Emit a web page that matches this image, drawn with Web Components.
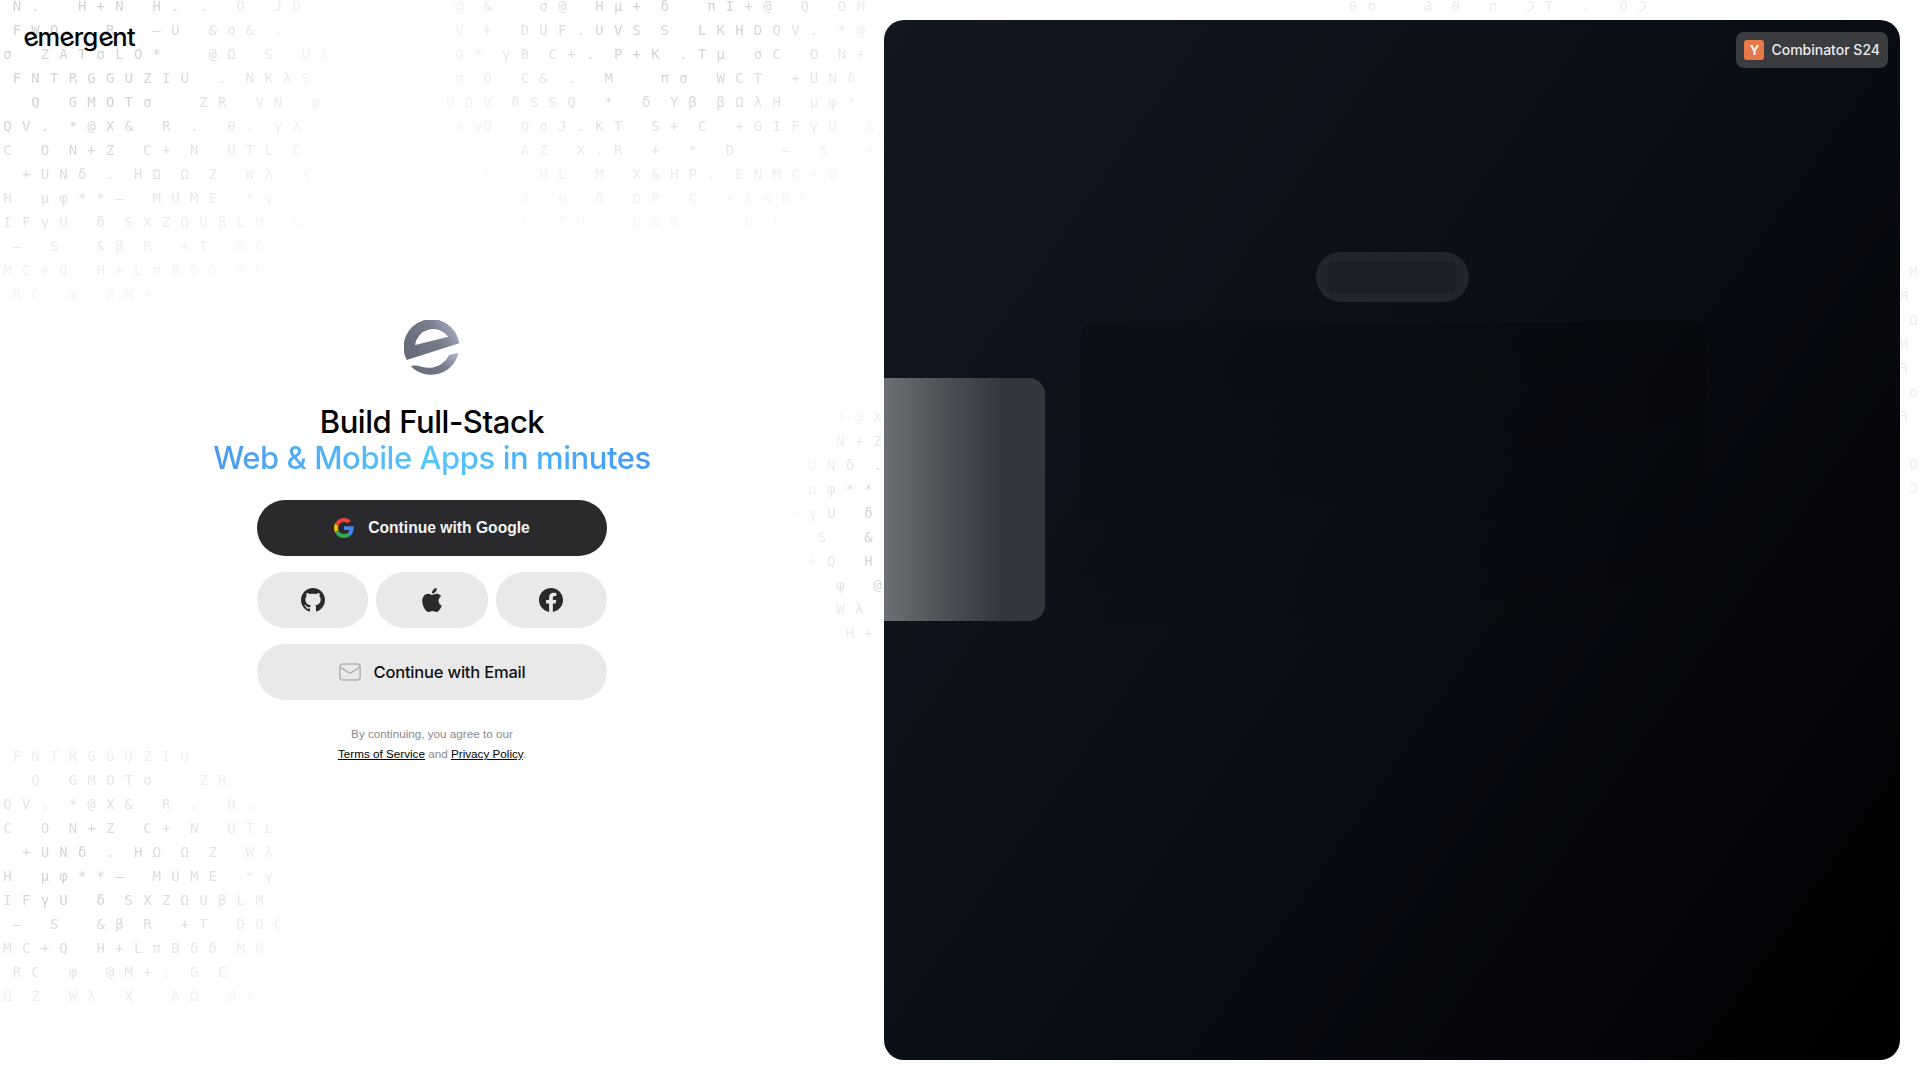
<!DOCTYPE html>
<html lang="en">
<head>
<meta charset="utf-8">
<title>emergent</title>
<style>
    html, body { margin: 0; height: 100%; background: #fff; }
</style>
</head>
<body>
<login-page>
    <glyph-field slot="glyphs" set="topLeft" trim style="left:3.33px;top:0;--mask:radial-gradient(ellipse 330px 290px at 60px 60px,#000 25%,transparent 100%)"></glyph-field>
    <glyph-field slot="glyphs" set="topMiddle" style="left:446px;top:0;--mask:radial-gradient(ellipse 300px 240px at 225px 25px,#000 20%,transparent 100%)"></glyph-field>
    <glyph-field slot="glyphs" set="bottomLeft" trim style="left:3.33px;top:750px;--mask:radial-gradient(ellipse 290px 190px at 80px 130px,#000 15%,transparent 100%)"></glyph-field>
    <glyph-field slot="glyphs" set="midRight" style="left:771px;top:411px;--mask:radial-gradient(ellipse 105px 170px at 118px 124px,#000 25%,transparent 100%)"></glyph-field>
    <glyph-field slot="glyphs" set="topRight" flip style="right:273px;top:0;--mask:linear-gradient(90deg,#000,#000)"></glyph-field>
    <glyph-field slot="glyphs" set="farRight" flip style="right:2px;top:266px;--mask:linear-gradient(90deg,#000,#000)"></glyph-field>

    <word-mark slot="wordmark"><i>e</i>m<i>e</i>rg<i>e</i>nt</word-mark>

    <auth-card slot="card">
        <e-mark slot="mark"></e-mark>
        <span slot="title">Build Full-Stack</span>
        <span slot="subtitle">Web &amp; Mobile Apps in minutes</span>
        <auth-button slot="primary" variant="dark" icon="google">Continue with Google</auth-button>
        <auth-button slot="socials" icon="github" label="GitHub"></auth-button>
        <auth-button slot="socials" icon="apple" label="Apple"></auth-button>
        <auth-button slot="socials" icon="facebook" label="Facebook"></auth-button>
        <auth-button slot="email" variant="light" icon="mail">Continue with Email</auth-button>
    </auth-card>

    <promo-panel slot="panel"></promo-panel>
</login-page>

<script>
const glyphSets = {
    topLeft: [
        "2N 4. 9H 11+ 13N 17H 19. 22. 26O 30J 32D",
        "2F 4W 6O 12R 17\u2014 19U 23& 25\u03c3 27& 30. 34.",
        "1\u03c3 5Z 7A 9T 11\u03c3 13L 15O 17* 23@ 25\u03a9 29S 33U 35&",
        "2F 4N 6T 8R 10G 12G 14U 16Z 18I 20U 24. 27N 29K 31\u03bb 33S",
        "4Q 8G 10M 12O 14T 16\u03c3 22Z 24R 28V 30N 34\u03c6",
        "1Q 3V 5. 8* 10@ 12X 14& 18R 21. 25\u03b8 27. 30\u03b3 32\u03bb",
        "1C 5O 8N 10+ 12Z 16C 18+ 21N 25U 27T 29L 32C",
        "3+ 5U 7N 9\u03b4 12. 15H 17\u03a9 20\u03a9 23Z 27W 29\u03bb 33X",
        "1H 5\u03bc 7\u03c6 9* 11* 13\u2014 17M 19U 21M 23E 27* 29\u03b3 31. 34.",
        "1I 3F 5\u03b3 7U 11\u03b4 14S 16X 18Z 20\u03a9 22U 24\u03b2 26L 28M 32&",
        "2\u2014 6S 11& 13\u03b2 16R 20+ 22T 26D 28O 30C",
        "1M 3C 5+ 7Q 11H 13+ 15L 17\u03c0 19B 21\u03b4 23\u03b4 26M 28N",
        "2R 4C 8\u03c6 12@ 14M 16+ 18. 21G 24E"
    ],
    topMiddle: [
        "1@ 4& 10\u03c3 12@ 16H 18\u03bc 20+ 23\u03b4 28\u03c0 30I 32+ 34@ 38Q 42O 44M",
        "1V 4+ 8D 10U 12F 14. 16U 18V 20S 23S 27L 29K 31H 33D 35Q 37V 39. 42* 44@",
        "1O 3* 6\u03b3 8B 11C 13+ 15. 18P 20+ 22K 25. 27T 29\u03bc 33\u03c3 35C 39O 42N 44+",
        "1\u03c0 4O 8C 10& 13. 17M 23\u03c0 25\u03c3 29W 31C 33T 37+ 39U 41N 43\u03b4",
        "0U 2\u03a9 4V 7\u03b4 9S 11S 13Q 17* 21\u03b4 24Y 26\u03b2 29\u03b2 31\u03a9 33\u03bb 35H 39\u03bc 41\u03c6 43*",
        "1A 3\u03b3 4\u03a9 8Q 10\u03c3 12J 14. 16K 18T 22S 24+ 27C 31+ 33G 35I 37F 39\u03b3 41U 45&",
        "0\u2014 8A 10Z 14X 16. 18R 22+ 26* 30D 36\u2014 40S 45+",
        "1O 4+ 10H 12L 16M 20X 22& 24H 26P 28. 31E 33N 35M 37C 39+ 41Q",
        "4\u03b4 6@ 8\u03b8 12\u03bc 16\u03b4 20\u03a9 22P 26C 30+ 32& 34& 36R 38C",
        "8C 12T 14U 20N 22K 24O 26. 32\u03a9 35C 38Z"
    ],
    bottomLeft: [
        "2F 4N 6T 8R 10G 12G 14U 16Z 18I 20U",
        "4Q 8G 10M 12O 14T 16\u03c3 22Z 24R",
        "1Q 3V 5. 8* 10@ 12X 14& 18R 21. 25\u03b8 27.",
        "1C 5O 8N 10+ 12Z 16C 18+ 21N 25U 27T 29L",
        "3+ 5U 7N 9\u03b4 12. 15H 17\u03a9 20\u03a9 23Z 27W 29\u03bb",
        "1H 5\u03bc 7\u03c6 9* 11* 13\u2014 17M 19U 21M 23E 27* 29\u03b3",
        "1I 3F 5\u03b3 7U 11\u03b4 14S 16X 18Z 20\u03a9 22U 24\u03b2 26L 28M",
        "2\u2014 6S 11& 13\u03b2 16R 20+ 22T 26D 28O 30C",
        "1M 3C 5+ 7Q 11H 13+ 15L 17\u03c0 19B 21\u03b4 23\u03b4 26M 28N",
        "2R 4C 8\u03c6 12@ 14M 16+ 18. 21G 24E",
        "1\u03a9 4Z 8W 10\u03bb 14X 19A 21\u03a9 25@ 27X"
    ],
    midRight: [
        "7* 9@ 11X",
        "7N 9+ 11Z",
        "2+ 4U 6N 8\u03b4 11.",
        "4\u03bc 6\u03c6 8* 10*",
        "2F 4\u03b3 6U 10\u03b4",
        "1\u2014 5S 10&",
        "0R 2C 4+ 6Q 10H",
        "1R 3C 7\u03c6 11@",
        "0\u03a9 3Z 7W 9\u03bb",
        "8H 10+"
    ],
    topRight: ["0C 2O 6. 10T 12C 16\u03c0 20\u03b8 23& 29\u03c3 31\u03b8"],
    farRight: ["0M", "1R", "0\u03a9", "1N", "1F", "0\u03c3", "1F", "", "0Q", "0C"]
};

class GlyphField extends HTMLElement {
    connectedCallback() {
        const root = this.attachShadow({ mode: 'open' });
        const rows = glyphSets[this.getAttribute('set')].map(row => {
            let line = '';
            row.split(' ').filter(Boolean).forEach(token => {
                const ch = token.slice(-1);
                line = line.padEnd(parseInt(token)) + ch;
            });
            return this.hasAttribute('trim') ? line.slice(1) : line;
        });
        root.innerHTML = `
            <style>
                :host {
                    display: block;
                    position: absolute;
                    pointer-events: none;
                    color: #d4d4d4;
                    font: 14px/12px "DejaVu Sans Mono", monospace;
                    letter-spacing: 0.9px;
                    -webkit-mask-image: var(--mask);
                    mask-image: var(--mask);
                }
                :host([flip]) { transform: scaleX(-1); color: #ececec; }
                div { height: 24px; white-space: pre; }
            </style>
            ${rows.map(r => `<div>${r.replace(/&/g, '&amp;')}</div>`).join('')}
        `;
    }
}
customElements.define('glyph-field', GlyphField);

class WordMark extends HTMLElement {
    connectedCallback() {
        this.attachShadow({ mode: 'open' }).innerHTML = `
            <style>
                :host {
                    display: block;
                    position: absolute;
                    z-index: 1;
                    left: 23px;
                    top: 19px;
                    color: #000;
                    font: 500 25.5px/36px Inter, sans-serif;
                    letter-spacing: -0.6px;
                }
                ::slotted(i) {
                    display: inline-block;
                    font-style: normal;
                    transform: rotate(-16deg);
                }
            </style>
            <slot></slot>
        `;
    }
}
customElements.define('word-mark', WordMark);

class EMark extends HTMLElement {
    connectedCallback() {
        this.attachShadow({ mode: 'open' }).innerHTML = `
            <style>
                :host { display: block; width: 56px; height: 56px; }
                svg { display: block; }
            </style>
            <svg width="56" height="56" viewBox="0 0 56 56">
                <defs>
                    <linearGradient id="steel" x1="0" y1="0.7" x2="1" y2="0.2">
                        <stop offset="0" stop-color="#666b78"/>
                        <stop offset="0.6" stop-color="#787d8c"/>
                        <stop offset="1" stop-color="#aeb2c6"/>
                    </linearGradient>
                </defs>
                <path fill="url(#steel)" fill-rule="evenodd" d="M2.7 40A28 28 0 1 1 55.3 23.3ZM11 25A18.5 18.5 0 0 1 44.3 16.7Z"/>
                <path fill="url(#steel)" d="M54.5 32.7A28 28 0 0 1 6.7 46C13 44 19 48 26 47.7C34 47.5 42 42 45 35Z"/>
            </svg>
        `;
    }
}
customElements.define('e-mark', EMark);

const authIcons = {
    google: `<svg width="20" height="20" viewBox="0 0 48 48">
        <path fill="#EA4335" d="M24 9.5c3.54 0 6.71 1.22 9.21 3.6l6.85-6.85C35.9 2.38 30.47 0 24 0 14.62 0 6.51 5.38 2.56 13.22l7.98 6.19C12.43 13.72 17.74 9.5 24 9.5z"/>
        <path fill="#4285F4" d="M46.98 24.55c0-1.57-.15-3.09-.38-4.55H24v9.02h12.94c-.58 2.96-2.26 5.48-4.78 7.18l7.73 6c4.51-4.18 7.09-10.36 7.09-17.65z"/>
        <path fill="#FBBC05" d="M10.53 28.59c-.48-1.45-.76-2.99-.76-4.59s.27-3.14.76-4.59l-7.98-6.19C.92 16.46 0 20.12 0 24c0 3.88.92 7.54 2.56 10.78l7.97-6.19z"/>
        <path fill="#34A853" d="M24 48c6.48 0 11.93-2.13 15.89-5.81l-7.73-6c-2.15 1.45-4.92 2.3-8.16 2.3-6.26 0-11.57-4.22-13.47-9.91l-7.98 6.19C6.51 42.62 14.62 48 24 48z"/>
    </svg>`,
    github: `<svg width="24" height="24" viewBox="0 0 16 16" fill="#2a2a2c"><path d="M8 0C3.58 0 0 3.58 0 8c0 3.54 2.29 6.53 5.47 7.59.4.07.55-.17.55-.38 0-.19-.01-.82-.01-1.49-2.01.37-2.53-.49-2.69-.94-.09-.23-.48-.94-.82-1.13-.28-.15-.68-.52-.01-.53.63-.01 1.08.58 1.23.82.72 1.21 1.87.87 2.33.66.07-.52.28-.87.51-1.07-1.78-.2-3.64-.89-3.64-3.95 0-.87.31-1.59.82-2.15-.08-.2-.36-1.02.08-2.12 0 0 .67-.21 2.2.82.64-.18 1.32-.27 2-.27.68 0 1.36.09 2 .27 1.53-1.04 2.2-.82 2.2-.82.44 1.1.16 1.92.08 2.12.51.56.82 1.27.82 2.15 0 3.07-1.87 3.75-3.65 3.95.29.25.54.73.54 1.48 0 1.07-.01 1.93-.01 2.2 0 .21.15.46.55.38A8.013 8.013 0 0016 8c0-4.42-3.58-8-8-8z"/></svg>`,
    apple: `<svg width="24" height="24" viewBox="0 0 24 24" fill="#2a2a2c"><path d="M12.152 6.896c-.948 0-2.415-1.078-3.96-1.04-2.04.027-3.91 1.183-4.961 3.014-2.117 3.675-.546 9.103 1.519 12.09 1.013 1.454 2.208 3.09 3.792 3.039 1.52-.065 2.09-.987 3.935-.987 1.831 0 2.35.987 3.96.948 1.637-.026 2.676-1.48 3.676-2.948 1.156-1.688 1.636-3.325 1.662-3.415-.039-.013-3.182-1.221-3.22-4.857-.026-3.04 2.48-4.494 2.597-4.559-1.429-2.09-3.623-2.324-4.39-2.376-2-.156-3.675 1.09-4.61 1.09zM15.53 3.83c.843-1.012 1.4-2.427 1.245-3.83-1.207.052-2.662.805-3.532 1.818-.78.896-1.454 2.338-1.273 3.714 1.338.104 2.715-.688 3.559-1.701"/></svg>`,
    facebook: `<svg width="24" height="24" viewBox="0 0 24 24" fill="#2a2a2c"><path d="M24 12.073c0-6.627-5.373-12-12-12s-12 5.373-12 12c0 5.99 4.388 10.954 10.125 11.854v-8.385H7.078v-3.47h3.047V9.43c0-3.007 1.792-4.669 4.533-4.669 1.312 0 2.686.235 2.686.235v2.953H15.83c-1.491 0-1.956.925-1.956 1.874v2.25h3.328l-.532 3.47h-2.796v8.385C19.612 23.027 24 18.062 24 12.073z"/></svg>`,
    mail: `<svg width="22" height="18" viewBox="0 0 22 18" fill="none" stroke="#b2b2b2" stroke-width="1.5" stroke-linejoin="round"><rect x="0.9" y="0.9" width="20.2" height="16.2" rx="3"/><path d="M1.2 4.2l8 5.2q1.8 1.1 3.6 0l8-5.2"/></svg>`
};

class AuthButton extends HTMLElement {
    connectedCallback() {
        this.attachShadow({ mode: 'open' }).innerHTML = `
            <style>
                :host {
                    display: flex;
                    flex: 1 0 56px;
                    align-items: center;
                    justify-content: center;
                    gap: 10px;
                    height: 56px;
                    border-radius: 28px;
                    background: #e9e9e9;
                    cursor: pointer;
                }
                :host([variant="dark"]) {
                    gap: 14px;
                    background: #2a2a2c;
                    color: #f4f4f4;
                    font: 700 15.65px "Liberation Sans", Arial, sans-serif;
                }
                :host([variant="light"]) {
                    gap: 13px;
                    color: #111;
                    font: 500 16.5px Inter, sans-serif;
                    letter-spacing: -0.2px;
                }
                svg { display: block; flex: none; }
                .ico { flex: none; }
            </style>
            <span class="ico" aria-label="${this.getAttribute('label') ?? ''}">${authIcons[this.getAttribute('icon')]}</span>
            <slot></slot>
        `;
    }
}
customElements.define('auth-button', AuthButton);

class AuthCard extends HTMLElement {
    connectedCallback() {
        this.attachShadow({ mode: 'open' }).innerHTML = `
            <style>
                :host {
                    display: flex;
                    flex-direction: column;
                    align-items: center;
                    width: 500px;
                    position: relative;
                }
                h1 {
                    margin: 28px 0 24px;
                    font: 500 31px/36px Inter, sans-serif;
                    letter-spacing: -0.43px;
                    text-align: center;
                    color: #000;
                }
                h1 .sub {
                    display: block;
                    background: linear-gradient(90deg, #4a9bef 0%, #58c6fb 50%, #3f97f7 100%);
                    -webkit-background-clip: text;
                    background-clip: text;
                    color: transparent;
                }
                .stack {
                    display: flex;
                    flex-direction: column;
                    gap: 16px;
                    width: 350px;
                }
                .row { display: flex; gap: 8px; }
                p {
                    margin: 24px 0 0;
                    color: #8a8a8a;
                    font: 11.7px/20px "Liberation Sans", Arial, sans-serif;
                    text-align: center;
                }
                a { color: #000; text-decoration: underline; }
            </style>
            <slot name="mark"></slot>
            <h1><slot name="title"></slot><span class="sub"><slot name="subtitle"></slot></span></h1>
            <div class="stack">
                <slot name="primary"></slot>
                <div class="row"><slot name="socials"></slot></div>
                <slot name="email"></slot>
            </div>
            <p>By continuing, you agree to our<br><a href="#">Terms of Service</a> and <a href="#">Privacy Policy</a>.</p>
        `;
    }
}
customElements.define('auth-card', AuthCard);

class YcBadge extends HTMLElement {
    connectedCallback() {
        this.attachShadow({ mode: 'open' }).innerHTML = `
            <style>
                :host {
                    display: flex;
                    align-items: center;
                    gap: 7px;
                    position: absolute;
                    top: 12px;
                    right: 12px;
                    height: 36px;
                    padding: 0 8px;
                    border-radius: 8px;
                    background: #3a3c40;
                    color: #ececec;
                    font: 500 14px Inter, sans-serif;
                }
                b {
                    display: flex;
                    align-items: center;
                    justify-content: center;
                    width: 20px;
                    height: 20px;
                    border-radius: 3px;
                    background: #e8794a;
                    color: #fff;
                    font-size: 13px;
                    font-weight: 700;
                }
                span { padding-bottom: 2px; }
            </style>
            <b>Y</b><span>Combinator S24</span>
        `;
    }
}
customElements.define('yc-badge', YcBadge);

class PromoPanel extends HTMLElement {
    connectedCallback() {
        this.attachShadow({ mode: 'open' }).innerHTML = `
            <style>
                :host {
                    display: flex;
                    flex-direction: column;
                    position: relative;
                    height: 100%;
                    overflow: hidden;
                    padding-top: 232px;
                    box-sizing: border-box;
                    border-radius: 20px;
                    background: linear-gradient(125deg, #111622 0%, #0b0f17 45%, #05070c 75%, #000 100%);
                }
                .pill {
                    align-self: center;
                    display: flex;
                    align-items: center;
                    justify-content: center;
                    width: 153px;
                    height: 50px;
                    border-radius: 25px;
                    background: #22252c;
                }
                .pill div {
                    width: 128px;
                    height: 32px;
                    border-radius: 5px;
                    background: #1b1e24;
                }
                .frame {
                    width: 625px;
                    height: 360px;
                    margin: 20px 0 0 196px;
                    border-radius: 14px;
                    background: linear-gradient(180deg, rgba(0,0,0,.2), rgba(0,0,0,0) 100%);
                }
                .side {
                    position: absolute;
                    left: 0;
                    top: 358px;
                    width: 161px;
                    height: 243px;
                    border-radius: 0 16px 16px 0;
                    background: linear-gradient(90deg, #6c6f73 0%, #4b4e54 40%, #32353b 75%, #34373d 100%);
                }
            </style>
            <yc-badge></yc-badge>
            <div class="pill"><div></div></div>
            <div class="frame"></div>
            <div class="side"></div>
        `;
    }
}
customElements.define('promo-panel', PromoPanel);

class LoginPage extends HTMLElement {
    connectedCallback() {
        this.attachShadow({ mode: 'open' }).innerHTML = `
            <style>
                :host {
                    display: grid;
                    grid-template-columns: 1fr 1016px;
                    gap: 20px;
                    position: relative;
                    height: 100vh;
                    padding: 20px 20px 20px 0;
                    box-sizing: border-box;
                    overflow: hidden;
                    background: #fff;
                }
                .left {
                    display: flex;
                    align-items: center;
                    justify-content: center;
                    padding-top: 4px;
                }
                ::slotted(promo-panel) { z-index: 1; }
                ::slotted(auth-card) { z-index: 1; }
            </style>
            <slot name="glyphs"></slot>
            <slot name="wordmark"></slot>
            <div class="left"><slot name="card"></slot></div>
            <slot name="panel"></slot>
        `;
    }
}
customElements.define('login-page', LoginPage);
</script>
</body>
</html>
